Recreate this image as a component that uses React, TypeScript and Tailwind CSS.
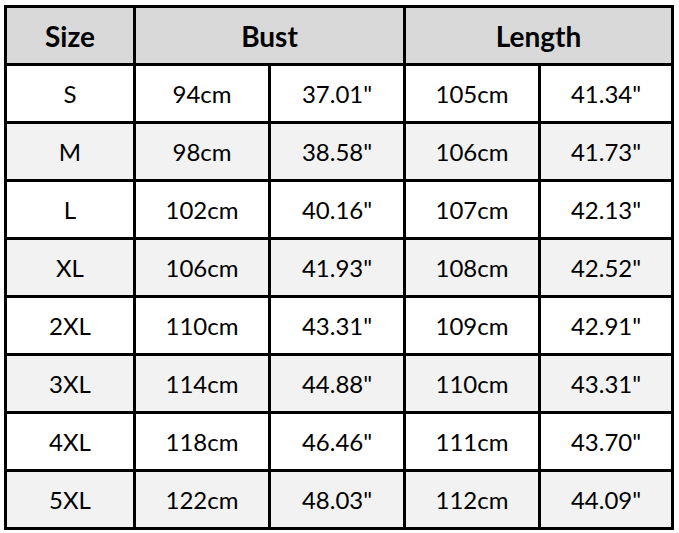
const rows = [
  ['S', '94cm', '37.01"', '105cm', '41.34"'],
  ['M', '98cm', '38.58"', '106cm', '41.73"'],
  ['L', '102cm', '40.16"', '107cm', '42.13"'],
  ['XL', '106cm', '41.93"', '108cm', '42.52"'],
  ['2XL', '110cm', '43.31"', '109cm', '42.91"'],
  ['3XL', '114cm', '44.88"', '110cm', '43.31"'],
  ['4XL', '118cm', '46.46"', '111cm', '43.70"'],
  ['5XL', '122cm', '48.03"', '112cm', '44.09"'],
]

export default function App() {
  return (
    <div className="min-h-screen bg-white pl-[4px] pt-[5px] font-['Lato',sans-serif] text-black">
      <div className="grid w-fit grid-cols-[126px_132px_132px_132px_130px] auto-rows-[55px] gap-[3px] bg-black p-[3px]">
        {/* Header */}
        <div className="flex items-center justify-center bg-[#d9d9d9] text-[28px] font-bold">Size</div>
        <div className="col-span-2 flex items-center justify-center bg-[#d9d9d9] text-[28px] font-bold">Bust</div>
        <div className="col-span-2 flex items-center justify-center bg-[#d9d9d9] text-[28px] font-bold">Length</div>

        {rows.map((row, i) =>
          row.map((cell, j) => (
            <div
              key={`${i}-${j}`}
              className={`flex items-center justify-center text-[24px] ${i % 2 === 0 ? 'bg-white' : 'bg-[#f2f2f2]'}`}
            >
              {cell}
            </div>
          ))
        )}
      </div>
    </div>
  )
}
